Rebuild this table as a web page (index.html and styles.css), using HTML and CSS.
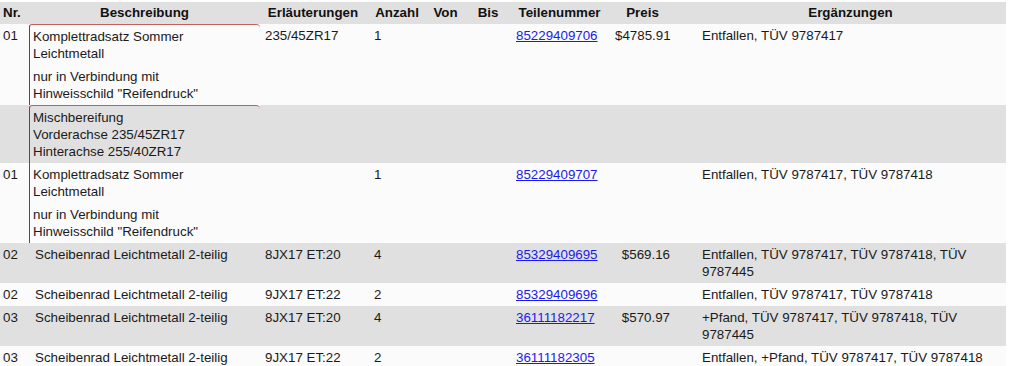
FILE: index.html
```html
<!DOCTYPE html>
<html lang="de">
<head>
<meta charset="utf-8">
<title>Teileliste</title>
<link rel="stylesheet" href="styles.css">
</head>
<body>
<table class="parts">
  <colgroup>
    <col class="c-nr"><col class="c-desc"><col class="c-erl"><col class="c-anz"><col class="c-von"><col class="c-bis"><col class="c-teil"><col class="c-preis"><col class="c-erg">
  </colgroup>
  <thead>
    <tr>
      <th class="nr">Nr.</th>
      <th>Beschreibung</th>
      <th>Erläuterungen</th>
      <th>Anzahl</th>
      <th>Von</th>
      <th>Bis</th>
      <th>Teilenummer</th>
      <th class="preis">Preis</th>
      <th>Ergänzungen</th>
    </tr>
  </thead>
  <tbody>
    <tr class="light">
      <td class="nr">01</td>
      <td class="desc grp grp-top">
        <div>Komplettradsatz Sommer<br>Leichtmetall</div>
        <div class="note">nur in Verbindung mit<br>Hinweisschild "Reifendruck"</div>
      </td>
      <td class="erl">235/45ZR17</td>
      <td class="anz">1</td>
      <td></td>
      <td></td>
      <td class="teil"><a href="#">85229409706</a></td>
      <td class="preis">$4785.91</td>
      <td class="erg">Entfallen, TÜV 9787417</td>
    </tr>
    <tr class="dark">
      <td class="nr"></td>
      <td class="desc grp grp-top">Mischbereifung<br>Vorderachse 235/45ZR17<br>Hinterachse 255/40ZR17</td>
      <td class="erl"></td>
      <td class="anz"></td>
      <td></td>
      <td></td>
      <td class="teil"></td>
      <td class="preis"></td>
      <td class="erg"></td>
    </tr>
    <tr class="light">
      <td class="nr">01</td>
      <td class="desc grp">
        <div>Komplettradsatz Sommer<br>Leichtmetall</div>
        <div class="note">nur in Verbindung mit<br>Hinweisschild "Reifendruck"</div>
      </td>
      <td class="erl"></td>
      <td class="anz">1</td>
      <td></td>
      <td></td>
      <td class="teil"><a href="#">85229409707</a></td>
      <td class="preis"></td>
      <td class="erg">Entfallen, TÜV 9787417, TÜV 9787418</td>
    </tr>
    <tr class="dark">
      <td class="nr">02</td>
      <td class="desc">Scheibenrad Leichtmetall 2-teilig</td>
      <td class="erl">8JX17 ET:20</td>
      <td class="anz">4</td>
      <td></td>
      <td></td>
      <td class="teil"><a href="#">85329409695</a></td>
      <td class="preis">$569.16</td>
      <td class="erg">Entfallen, TÜV 9787417, TÜV 9787418, TÜV 9787445</td>
    </tr>
    <tr class="light">
      <td class="nr">02</td>
      <td class="desc">Scheibenrad Leichtmetall 2-teilig</td>
      <td class="erl">9JX17 ET:22</td>
      <td class="anz">2</td>
      <td></td>
      <td></td>
      <td class="teil"><a href="#">85329409696</a></td>
      <td class="preis"></td>
      <td class="erg">Entfallen, TÜV 9787417, TÜV 9787418</td>
    </tr>
    <tr class="dark">
      <td class="nr">03</td>
      <td class="desc">Scheibenrad Leichtmetall 2-teilig</td>
      <td class="erl">8JX17 ET:20</td>
      <td class="anz">4</td>
      <td></td>
      <td></td>
      <td class="teil"><a href="#">36111182217</a></td>
      <td class="preis">$570.97</td>
      <td class="erg">+Pfand, TÜV 9787417, TÜV 9787418, TÜV 9787445</td>
    </tr>
    <tr class="light">
      <td class="nr">03</td>
      <td class="desc">Scheibenrad Leichtmetall 2-teilig</td>
      <td class="erl">9JX17 ET:22</td>
      <td class="anz">2</td>
      <td></td>
      <td></td>
      <td class="teil"><a href="#">36111182305</a></td>
      <td class="preis"></td>
      <td class="erg">Entfallen, +Pfand, TÜV 9787417, TÜV 9787418</td>
    </tr>
  </tbody>
</table>
</body>
</html>
```
FILE: styles.css
```css
html, body {
  margin: 0;
  background: #ffffff;
}
body {
  padding-top: 2px;
  font-family: "Liberation Sans", Arial, sans-serif;
  font-size: 13.33px;
  line-height: 17px;
  color: #1a1a1a;
}
.parts {
  width: 1006px;
  table-layout: fixed;
  border-collapse: separate;
  border-spacing: 0;
}
.c-nr { width: 29px; }
.c-desc { width: 231px; }
.c-erl { width: 106px; }
.c-anz { width: 62px; }
.c-von { width: 35px; }
.c-bis { width: 50px; }
.c-teil { width: 93px; }
.c-preis { width: 89px; }
.c-erg { width: 311px; }

.parts th {
  background: #e0e0e0;
  font-weight: bold;
  color: #111111;
  text-align: center;
  padding: 2px 2px 3px;
  white-space: nowrap;
}
.parts th.nr {
  text-align: left;
  padding-left: 3px;
}
.parts th.preis {
  padding-left: 9px;
  padding-right: 25px;
}
.parts td {
  vertical-align: top;
  padding: 3px 3px;
  text-align: left;
}
tr.light td { background: #fbfbfb; }
tr.dark td { background: #e0e0e0; }

td.nr { padding-left: 3px; }
td.desc { padding-left: 6px; }
td.erl { padding-left: 5px; }
td.anz { padding-left: 8px; }
td.teil { padding-left: 3px; }
td.preis {
  text-align: right;
  padding-left: 9px;
  padding-right: 25px;
}
td.erg {
  padding-left: 7px;
  padding-right: 6px;
}

td.grp {
  border-left: 1px solid #a52a2a;
  padding-left: 3px;
}
td.grp-top {
  border-top: 1px solid #c25e5e;
  border-top-left-radius: 3px;
  border-top-right-radius: 4px;
}
.note { margin-top: 6px; }

.parts a {
  color: #1a1aee;
  text-decoration: underline;
}
```
